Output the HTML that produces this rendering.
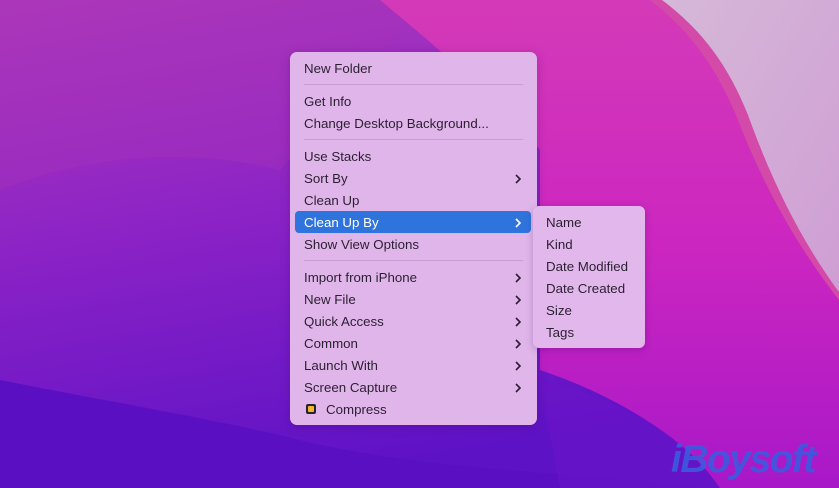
<!DOCTYPE html>
<html><head><meta charset="utf-8"><style>
html,body{margin:0;padding:0}
body{width:839px;height:488px;position:relative;overflow:hidden;font-family:"Liberation Sans",sans-serif}
svg.bg{position:absolute;left:0;top:0}
.menu{position:absolute;left:290px;top:52px;width:247px;height:373px;background:#e0b6ea;border-radius:7px;box-shadow:0 2px 10px rgba(60,0,90,.25)}
.sub{position:absolute;left:533px;top:206px;width:112px;height:142px;background:#e2b8ec;border-radius:6px;box-shadow:0 2px 8px rgba(60,0,90,.25)}
.it{position:absolute;left:14px;font-size:13.3px;color:#2a1f30;line-height:22px;height:22px;white-space:nowrap;margin-top:1px}
.sub .it{left:13px}
.sep{position:absolute;left:14px;right:14px;height:1px;background:#c89fd2}
.hl{position:absolute;left:5px;width:236px;top:159px;height:22px;background:#2f74dc;border-radius:4px}
.ch{position:absolute;left:224px;width:8px;height:10px}
</style></head><body>
<svg class="bg" width="839" height="488" viewBox="0 0 839 488">
<defs>
<linearGradient id="g1" x1="0" y1="0" x2="0.3" y2="1"><stop offset="0" stop-color="#b03aba"/><stop offset="0.5" stop-color="#8a22c6"/><stop offset="1" stop-color="#5e12c6"/></linearGradient>
<linearGradient id="g2" x1="0" y1="0" x2="0" y2="1"><stop offset="0" stop-color="#d43ab8"/><stop offset="0.5" stop-color="#cc26c0"/><stop offset="1" stop-color="#a818c8"/></linearGradient>
<linearGradient id="g3" x1="0" y1="0" x2="1" y2="1"><stop offset="0" stop-color="#d6b8d8"/><stop offset="1" stop-color="#cf9ed4"/></linearGradient>
</defs>
<rect width="839" height="488" fill="url(#g1)"/>
<path d="M0 0 H420 C380 60 330 120 280 170 C200 150 100 150 0 190 Z" fill="#a631ba" opacity=".4"/>
<path d="M380 0 H839 V488 H720 C680 430 600 390 540 370 L540 150 C500 100 440 50 380 0 Z" fill="url(#g2)"/>
<path d="M0 380 C100 400 220 420 300 440 C420 470 560 470 700 488 H0 Z" fill="#5a10c2"/>
<path d="M540 380 C620 400 680 430 720 488 H560 Z" fill="#6a14c8" opacity=".6"/>
<path d="M650 0 H839 V300 C800 250 765 190 738 120 C718 70 690 30 650 0 Z" fill="#d44aa8"/>
<path d="M662 0 H839 V292 C802 242 772 182 748 115 C728 65 702 30 662 0 Z" fill="url(#g3)"/>
</svg>
<div class="menu">
<div class="it" style="top:5px">New Folder</div>
<div class="sep" style="top:32px"></div>
<div class="it" style="top:38px">Get Info</div>
<div class="it" style="top:60px">Change Desktop Background...</div>
<div class="sep" style="top:87px"></div>
<div class="it" style="top:93px">Use Stacks</div>
<div class="it" style="top:115px">Sort By</div>
<div class="it" style="top:137px">Clean Up</div>
<div class="hl"></div>
<div class="it" style="top:159px;color:#fff">Clean Up By</div>
<div class="it" style="top:181px">Show View Options</div>
<div class="sep" style="top:208px"></div>
<div class="it" style="top:214px">Import from iPhone</div>
<div class="it" style="top:236px">New File</div>
<div class="it" style="top:258px">Quick Access</div>
<div class="it" style="top:280px">Common</div>
<div class="it" style="top:302px">Launch With</div>
<div class="it" style="top:324px">Screen Capture</div>
<div style="position:absolute;left:16px;top:352px;width:10px;height:10px;background:#2a2230;border-radius:2px"><div style="position:absolute;left:2px;top:2px;width:6px;height:6px;background:#f0b830;border-radius:1px"></div></div>
<div class="it" style="top:346px;left:36px">Compress</div>
<svg class="ch" style="top:122px" viewBox="0 0 8 10"><path d="M2 1 L6 5 L2 9" fill="none" stroke="#2a1f30" stroke-width="1.6"/></svg>
<svg class="ch" style="top:166px" viewBox="0 0 8 10"><path d="M2 1 L6 5 L2 9" fill="none" stroke="#fff" stroke-width="1.6"/></svg>
<svg class="ch" style="top:221px" viewBox="0 0 8 10"><path d="M2 1 L6 5 L2 9" fill="none" stroke="#2a1f30" stroke-width="1.6"/></svg>
<svg class="ch" style="top:243px" viewBox="0 0 8 10"><path d="M2 1 L6 5 L2 9" fill="none" stroke="#2a1f30" stroke-width="1.6"/></svg>
<svg class="ch" style="top:265px" viewBox="0 0 8 10"><path d="M2 1 L6 5 L2 9" fill="none" stroke="#2a1f30" stroke-width="1.6"/></svg>
<svg class="ch" style="top:287px" viewBox="0 0 8 10"><path d="M2 1 L6 5 L2 9" fill="none" stroke="#2a1f30" stroke-width="1.6"/></svg>
<svg class="ch" style="top:309px" viewBox="0 0 8 10"><path d="M2 1 L6 5 L2 9" fill="none" stroke="#2a1f30" stroke-width="1.6"/></svg>
<svg class="ch" style="top:331px" viewBox="0 0 8 10"><path d="M2 1 L6 5 L2 9" fill="none" stroke="#2a1f30" stroke-width="1.6"/></svg>
</div>
<div class="sub">
<div class="it" style="top:5px">Name</div>
<div class="it" style="top:27px">Kind</div>
<div class="it" style="top:49px">Date Modified</div>
<div class="it" style="top:71px">Date Created</div>
<div class="it" style="top:93px">Size</div>
<div class="it" style="top:115px">Tags</div>
</div>
<div style="position:absolute;left:671px;top:438px;font-size:39px;font-weight:bold;font-style:italic;color:#3b5be0;letter-spacing:-1.5px;line-height:44px;opacity:.9">iBoysoft</div>
</body></html>
